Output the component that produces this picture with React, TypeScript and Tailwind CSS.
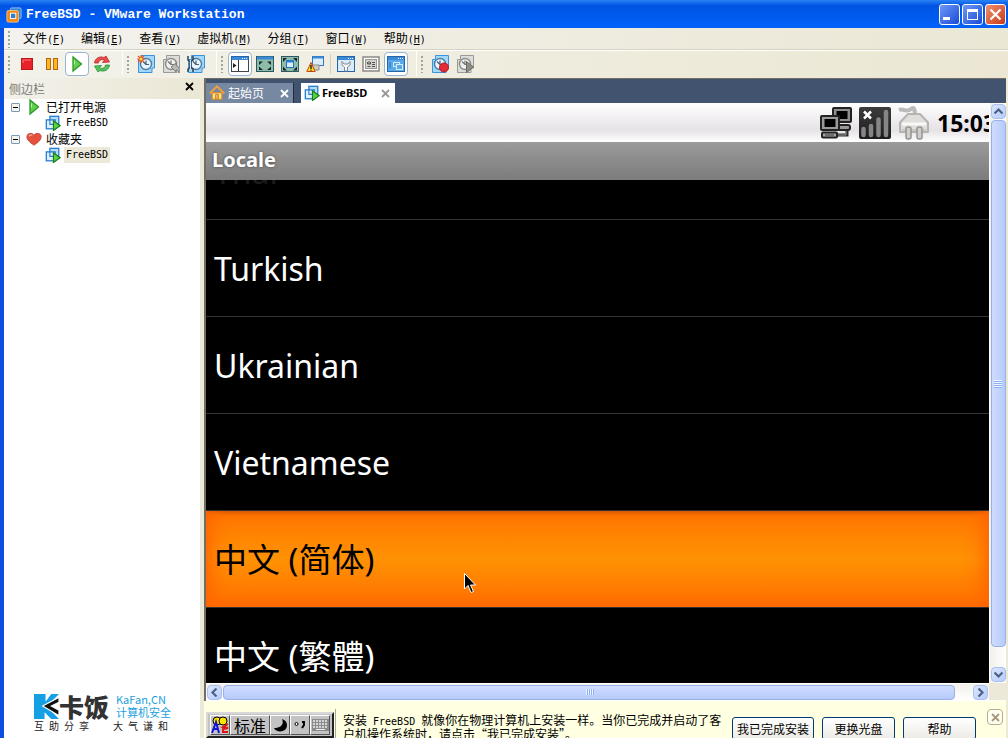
import type { ReactNode } from 'react'

const menus = [
  { label: '文件', key: 'F' },
  { label: '编辑', key: 'E' },
  { label: '查看', key: 'V' },
  { label: '虚拟机', key: 'M' },
  { label: '分组', key: 'T' },
  { label: '窗口', key: 'W' },
  { label: '帮助', key: 'H' }
]

const locales = [
  { name: 'Turkish', selected: false },
  { name: 'Ukrainian', selected: false },
  { name: 'Vietnamese', selected: false },
  { name: '中文 (简体)', selected: true },
  { name: '中文 (繁體)', selected: false }
]

/* ---------- 图标 ---------- */

function Svg({ size = 18, children }: { size?: number; children: ReactNode }) {
  return (
    <svg width={size} height={size} viewBox="0 0 18 18" fill="none" aria-hidden="true" className="shrink-0">
      {children}
    </svg>
  )
}

function LogoIcon() {
  return (
    <Svg size={16}>
      <rect x="5" y="1" width="12" height="12" rx="1.5" fill="#2f86d8" stroke="#9cc8f0" />
      <rect x="1" y="4" width="13" height="13" rx="1.5" fill="#f08a1c" stroke="#f9c27a" />
      <rect x="5" y="7" width="6" height="6" fill="#2f7fd0" stroke="#fff" />
    </Svg>
  )
}

function StopIcon() {
  return (
    <Svg>
      <rect x="3.5" y="3.500" width="11" height="11" fill="#e8222a" stroke="#b81a1a" />
      <path d="M5 8V5h8" stroke="#f77" />
    </Svg>
  )
}

function PauseIcon() {
  return (
    <Svg>
      <rect x="3.5" y="3.5" width="4" height="11" fill="#ffb520" stroke="#b8670c" />
      <rect x="10.5" y="3.5" width="4" height="11" fill="#ffb520" stroke="#b8670c" />
    </Svg>
  )
}

function PlayIcon() {
  return (
    <Svg>
      <path d="M5 2v14l8.500-7z" fill="#62d04c" stroke="#2c9a28" strokeWidth="1.300" />
      <path d="M6.500 5.500v4" stroke="#b9f0a8" />
    </Svg>
  )
}

function RestartIcon() {
  return (
    <Svg>
      <path d="M1.500 8C2 3 7 .8 11 2.500l2-1.500 3.500 6-7 .5 2-2.200C8.500 4 6 5 5.500 8z" fill="#ee4a4a" stroke="#b52b2b" strokeWidth=".8" />
      <path d="M16.500 10c-.5 5-5.500 7.200-9.500 5.500L5 17 1.500 11l7-.5-2 2.200c3 1.300 5.500.3 6-2.700z" fill="#55c25c" stroke="#2a8d35" strokeWidth=".8" />
    </Svg>
  )
}

type ClockProps = { gray?: boolean; children?: ReactNode }

function SnapshotIcon({ gray, children }: ClockProps) {
  const line = gray ? '#9a9a98' : '#3a94dc'
  return (
    <Svg>
      <path d="M4.500.5h13v12.500h-2.500v4.500H1.500v-13h3z" fill={gray ? '#dcdcda' : '#a4d6f6'} stroke={line} />
      <circle cx="9" cy="9" r="5.500" fill={gray ? '#f0f0ee' : '#eaf6fd'} stroke={gray ? '#8a8a88' : '#4a7da6'} strokeWidth="1.400" />
      <path d="M9 5.500V9.500h3M9 9.500 6 6.500" stroke={gray ? '#777' : '#44617a'} strokeWidth="1.200" />
      {children}
    </Svg>
  )
}

function WindowFrame({ children, fill = '#fff' }: { children: ReactNode; fill?: string }) {
  return (
    <Svg>
      <rect x=".5" y="1.500" width="17" height="15" fill={fill} stroke="#2466a8" />
      <rect x="1" y="2" width="16" height="3" fill="#3a8ad8" />
      <path d="M11 3.500h1M13 3.500h1M15 3.500h1" stroke="#fff" />
      {children}
    </Svg>
  )
}

function CornerArrows({ inner }: { inner?: boolean }) {
  return (
    <Svg>
      <rect x=".5" y="1.500" width="17" height="15" fill="#8fbba9" stroke="#2c5a63" />
      {!inner && <path d="M1 3h16" stroke="#3a8ad8" strokeWidth="3" />}
      <path
        d={inner ? 'M2 3h4L2 7zM16 3h-4l4 4zM2 15.500h4l-4-4zM16 15.500h-4l4-4z' : 'M3 6.500h4L3 10zM15 6.500h-4l4 3.500zM3 15h4l-4-3.500zM15 15h-4l4-3.500z'}
        fill="#16262c"
      />
      {inner && (
        <>
          <rect x="5.500" y="5.500" width="7" height="7" fill="#d9ecfb" stroke="#1f6fc0" />
          <path d="M5 6.500h8" stroke="#2a80d6" strokeWidth="2" />
        </>
      )}
    </Svg>
  )
}

function UnityIcon() {
  return (
    <Svg>
      <rect x="6.500" y="1.500" width="11" height="9" fill="#dcecfa" stroke="#3178c0" />
      <path d="M7 2.500h10" stroke="#3a8ad8" strokeWidth="2" />
      <path d="M6 10h7v5H8z" fill="#cfcfc6" stroke="#8d8d84" />
      <path d="M5 7.500.8 16.500h8.400z" fill="#ffdf26" stroke="#c84518" />
      <path d="M5 10v4M5 14.800v1" stroke="#000" strokeWidth="1.200" />
    </Svg>
  )
}

function VmIcon() {
  return (
    <Svg size={16}>
      <rect x="5.500" y="1.500" width="10" height="9" fill="#b4dcf8" stroke="#2b80cf" strokeWidth="1.500" />
      <rect x="1.500" y="5.500" width="10" height="10" fill="#dff0fd" stroke="#2b80cf" strokeWidth="1.500" />
      <path d="M5.500 5v5.500h6" stroke="#2b80cf" strokeWidth="1.300" />
      <path d="M9.500 6.500v11l7.500-5.500z" fill="#5cd03f" stroke="#167f18" strokeWidth="1.300" />
    </Svg>
  )
}

function HomeIcon() {
  return (
    <Svg size={16}>
      <path d="M3.500 8.500h11V16h-11z" fill="#fbe08a" stroke="#d58a28" strokeWidth="1.300" />
      <path d="M.8 9.500 9 1.500l8.200 8" stroke="#eda23c" strokeWidth="2.200" />
      <path d="M7.500 10.500h3V16h-3z" fill="#f3b455" stroke="#c87b1e" />
    </Svg>
  )
}

function HeartIcon() {
  return (
    <Svg size={16}>
      <path d="M9 16C4 12.500 1 10 1 6.500 1 2 7 1.500 9 4.800c2-3.300 8-2.800 8 1.700 0 3.500-3 6-8 9.500z" fill="#e4523f" stroke="#bf4536" />
      <path d="M3.500 6c.4-1.800 2.200-2 3.500-1" stroke="#f8a899" strokeWidth="1.500" />
    </Svg>
  )
}

function CloseIcon({ className = '' }: { className?: string }) {
  return (
    <svg width="9" height="9" viewBox="0 0 9 9" className={className} aria-hidden="true">
      <path d="M1 1l7 7M8 1L1 8" stroke="currentColor" strokeWidth="1.800" />
    </svg>
  )
}

function Chevron({ d }: { d: string }) {
  return (
    <svg width="9" height="9" viewBox="0 0 9 9" fill="none" aria-hidden="true">
      <path d={d} stroke="#4d6185" strokeWidth="2.200" />
    </svg>
  )
}

function NetworkIcon() {
  return (
    <svg width="32" height="32" viewBox="0 0 32 32" aria-hidden="true">
      <path d="M20 22h7v6H17" fill="none" stroke="#2a2a2a" strokeWidth="3" />
      <rect x="13" y="1" width="18" height="14" rx="1" fill="#8d8d8d" stroke="#222" strokeWidth="2" />
      <rect x="16.500" y="4" width="11" height="8" fill="#000" />
      <rect x="18" y="18" width="12" height="5" rx="2" fill="#9a9a9a" stroke="#222" strokeWidth="2" />
      <rect x="1" y="9" width="18" height="14" rx="1" fill="#9a9a9a" stroke="#222" strokeWidth="2" />
      <rect x="4.500" y="12" width="11" height="8" fill="#000" />
      <rect x="2" y="25.500" width="15" height="5" rx="1" fill="#a8a8a8" stroke="#222" strokeWidth="2" />
      <path d="M5 28h9" stroke="#333" />
      <path d="M18 28h8V24" fill="none" stroke="#999" strokeWidth="1" />
    </svg>
  )
}

function SignalIcon() {
  return (
    <svg width="32" height="32" viewBox="0 0 32 32" aria-hidden="true">
      <defs>
        <linearGradient id="signal" x1="0" y1="0" x2="0" y2="1">
          <stop offset="0" stopColor="#3c3c3c" />
          <stop offset="1" stopColor="#1d1d1d" />
        </linearGradient>
      </defs>
      <rect width="32" height="32" rx="2" fill="url(#signal)" />
      <path d="M4.500 28v-6M12 28V19M19.500 28V12.500M27 28V5" stroke="#868686" strokeWidth="4.500" strokeLinecap="round" />
      <path d="M5 4.500l7 7M12 4.500l-7 7" stroke="#fff" strokeWidth="2.500" />
    </svg>
  )
}

function PlugIcon() {
  return (
    <svg width="32" height="36" viewBox="0 0 32 36" fill="none" aria-hidden="true">
      <path d="M1 5c5-2 7 3 12-1 3-3 4 1 4 6" stroke="#bcbab8" strokeWidth="4" />
      <path d="M10 9h12l8 8.500V27H2v-9.500z" fill="#e0dedb" stroke="#b6b4b1" strokeWidth="2" strokeLinejoin="round" />
      <path d="M4 19h24" stroke="#f8f8f6" strokeWidth="3" />
      <path d="M4 25h24" stroke="#cbc9c6" strokeWidth="2" />
      <rect x="8" y="22" width="5" height="12" rx="2" fill="#d0cecb" stroke="#96948f" strokeWidth="1.500" />
      <rect x="19" y="22" width="5" height="12" rx="2" fill="#d0cecb" stroke="#96948f" strokeWidth="1.500" />
    </svg>
  )
}

/* ---------- 工具栏 ---------- */

function Grip() {
  return (
    <svg width="3" height="18" viewBox="0 0 3 18" className="mr-[3px] shrink-0" aria-hidden="true">
      <path d="M1 1v17" stroke="#a5a397" strokeWidth="2" strokeDasharray="2 2" />
    </svg>
  )
}

function ToolButton({ label, active, children }: { label: string; active?: boolean; children: ReactNode }) {
  return (
    <button
      aria-label={label}
      className={`flex h-6 w-6 items-center justify-center rounded-sm border ${
        active ? 'border-[#98b5d2] bg-white' : 'border-transparent'
      }`}
    >
      {children}
    </button>
  )
}

function ToolGroup({ children, last }: { children: ReactNode; last?: boolean }) {
  return (
    <div className={`flex items-center gap-px pl-1 pr-2 ${last ? '' : 'border-r border-white'}`}>
      <Grip />
      {children}
    </div>
  )
}

function Toolbar() {
  return (
    <div className="flex h-7 shrink-0 border-t border-white bg-linear-to-r from-[#f3f2ea] to-[#ebe7d3] pb-0.5">
      <ToolGroup>
        <ToolButton label="关机"><StopIcon /></ToolButton>
        <ToolButton label="挂起"><PauseIcon /></ToolButton>
        <ToolButton label="开机" active><PlayIcon /></ToolButton>
        <ToolButton label="重启"><RestartIcon /></ToolButton>
      </ToolGroup>
      <ToolGroup>
        <ToolButton label="创建快照">
          <SnapshotIcon>
            <path d="M4 0v8M0 4h8M1 1l6 6M7 1 1 7" stroke="#f0501c" strokeWidth="1.200" />
            <circle cx="4" cy="4" r="1.500" fill="#ffd83a" />
          </SnapshotIcon>
        </ToolButton>
        <ToolButton label="恢复快照">
          <SnapshotIcon gray>
            <path d="M9 12l5-4v2.500c3 .5 4 4 3 7.500-1-3-2-3-3-3v2z" fill="#b9b9b7" stroke="#7d7d7b" />
          </SnapshotIcon>
        </ToolButton>
        <ToolButton label="管理快照">
          <SnapshotIcon>
            <path d="M1 1v4l2 1.500v6L1 14v3M6 1v4L4 6.500v6L6 14v3" fill="none" stroke="#2f4256" strokeWidth="1.500" />
            <path d="M3.500 5v9" stroke="#dfe9f2" />
          </SnapshotIcon>
        </ToolButton>
      </ToolGroup>
      <ToolGroup>
        <ToolButton label="显示侧边栏" active>
          <WindowFrame>
            <path d="M7.500 5v11.500" stroke="#333" />
            <path d="M.5 5v11.500h17V5" stroke="#444" />
            <path d="M2 8v5l3.500-2.500z" fill="#222" />
          </WindowFrame>
        </ToolButton>
        <ToolButton label="全屏"><CornerArrows /></ToolButton>
        <ToolButton label="快速切换"><CornerArrows inner /></ToolButton>
        <ToolButton label="Unity"><UnityIcon /></ToolButton>
        <span className="mx-0.5 h-5 w-px bg-[#d3cfba]" />
        <ToolButton label="设置">
          <WindowFrame fill="#dcebf8">
            <path d="M5 6.500v3.500l2.500 2V16h3v-4l2.500-2V6.500l-2 2.500H7z" fill="#fff" stroke="#7d8c9a" />
          </WindowFrame>
        </ToolButton>
        <ToolButton label="摘要">
          <Svg>
            <rect x="1" y="2" width="16" height="14" fill="#fff" stroke="#8c8a84" strokeWidth="1.500" />
            <rect x="3.500" y="4.500" width="11" height="9" fill="#d4d3cf" stroke="#9a9892" />
            <path d="M5.500 7v2h3V7M7 6v3M5.500 11.500h3M10 7.500h3M10 9.500h3M10 11.500h3" stroke="#555" />
          </Svg>
        </ToolButton>
        <ToolButton label="控制台" active>
          <WindowFrame fill="#5aaaea">
            <rect x="6.500" y="7.500" width="6" height="4" stroke="#d6ecfc" />
            <rect x="9.500" y="9.500" width="6" height="5" fill="#5aaaea" stroke="#d6ecfc" />
            <path d="M2 8h2M2 10h2M2 12h2" stroke="#2c72b8" />
          </WindowFrame>
        </ToolButton>
      </ToolGroup>
      <ToolGroup last>
        <ToolButton label="录制">
          <SnapshotIcon>
            <circle cx="13" cy="12.500" r="4.500" fill="#e42a35" stroke="#b81823" />
          </SnapshotIcon>
        </ToolButton>
        <ToolButton label="回放">
          <SnapshotIcon gray>
            <path d="M10.500 6.500v11l7-5.500z" fill="#8b8f88" stroke="#666a64" />
          </SnapshotIcon>
        </ToolButton>
      </ToolGroup>
    </div>
  )
}

/* ---------- 侧边栏 ---------- */

function TreeGroup({ icon, label, selected }: { icon: ReactNode; label: string; selected?: boolean }) {
  return (
    <li>
      <div className="flex h-4 items-center pl-[7px]">
        <button
          aria-label={`折叠${label}`}
          className="flex h-[9px] w-[9px] items-center justify-center rounded-[1px] border border-[#7b98b5] bg-[#f4f3ec]"
        >
          <span className="h-px w-[5px] bg-black" />
        </button>
        <span className="ml-1.5 mr-1 flex w-4 justify-center">{icon}</span>
        <span className="text-xs leading-4">{label}</span>
      </div>
      <div className="flex h-4 items-center pl-[41px]">
        <VmIcon />
        <span className={`ml-[3px] px-0.5 font-[DejaVu_Sans_Mono,monospace] text-[10px] leading-4 ${selected ? 'bg-[#ece9d8]' : ''}`}>
          FreeBSD
        </span>
      </div>
    </li>
  )
}

function Sidebar() {
  return (
    <aside className="flex w-[196px] shrink-0 flex-col bg-white">
      <div className="flex h-[21px] shrink-0 items-center justify-between bg-linear-to-r from-[#f2f1ea] to-[#ebe7d5] pl-[5px] pr-1.5">
        <h2 className="text-xs leading-4 text-[#7f7d74]">侧边栏</h2>
        <button aria-label="关闭侧边栏" className="mb-1"><CloseIcon /></button>
      </div>
      <ul>
        <TreeGroup icon={<PlayIcon />} label="已打开电源" />
        <TreeGroup icon={<HeartIcon />} label="收藏夹" selected />
      </ul>
      <div className="mt-auto pb-1.5 pl-[30px]">
        <div className="flex items-center">
          <svg width="25" height="25" viewBox="0 0 26 26" aria-hidden="true">
            <path d="M0 0h12v8L18 0h8l-8 8v10l8 8h-8l-7-7v7H0z" fill="#159fe4" />
            <path d="M26 3.500 9 12.500l17 10V17l-8-4.500 8-4z" fill="#111" stroke="#fff" strokeWidth="1.200" />
          </svg>
          <strong className="text-[25px] leading-7 font-black text-[#333]">卡饭</strong>
          <div className="ml-[7px] text-[11px] leading-[13px] text-[#1a9fe0]">
            <p>KaFan,CN</p>
            <p>计算机安全</p>
          </div>
        </div>
        <div className="flex gap-6 text-[10px] leading-3 text-[#222]">
          {['互助分享', '大气谦和'].map((motto) => (
            <p key={motto} className="flex gap-[5px]">
              {[...motto].map((char) => (
                <span key={char}>{char}</span>
              ))}
            </p>
          ))}
        </div>
      </div>
    </aside>
  )
}

/* ---------- 虚拟机画面 ---------- */

function TabBar() {
  return (
    <div className="flex h-6 shrink-0 items-end bg-[#41536f]">
      <div className="flex h-5 items-center border-r border-[#1f2a3a] bg-[#7788a3] pl-[3px] pr-1 text-white">
        <HomeIcon />
        <button className="ml-[3px] text-xs leading-4">起始页</button>
        <button aria-label="关闭起始页" className="ml-4"><CloseIcon /></button>
      </div>
      <div className="ml-[7px] flex h-5 items-center bg-white pl-[3px] pr-[5px]">
        <VmIcon />
        <button className="ml-0.5 font-[Noto_Sans,sans-serif] text-[11px] leading-4 font-bold">FreeBSD</button>
        <button aria-label="关闭 FreeBSD" className="ml-3.5 text-[#999]"><CloseIcon /></button>
      </div>
    </div>
  )
}

function GuestScreen() {
  return (
    <div className="flex min-w-0 flex-1 flex-col overflow-hidden bg-black font-[Noto_Sans,Noto_Sans_CJK_SC,sans-serif]">
      <div className="flex h-[39px] shrink-0 items-center justify-end gap-[7px] bg-linear-to-b from-white via-[#e6e2e6] via-70% to-white">
        <NetworkIcon />
        <SignalIcon />
        <PlugIcon />
        <span className="w-[52px] overflow-hidden text-[23px] leading-7 font-bold text-black">15:03</span>
      </div>
      <h1 className="h-[38px] shrink-0 bg-linear-to-b from-[#9b9b9b] to-[#7c7c7c] pl-1.5 text-xl leading-[36px] font-bold text-white [text-shadow:0_0_3px_#444]">
        Locale
      </h1>
      <ul className="min-h-0 flex-1 overflow-hidden text-[32px] leading-10">
        <li className="flex h-10 items-end overflow-hidden border-b border-[#333]">
          <button className="h-24 shrink-0 pl-2 pt-0.5 text-[#1c1c1c]">Thai</button>
        </li>
        {locales.map((locale) => (
          <li key={locale.name} className="border-b border-[#333]">
            <button
              className={`block h-24 w-full pl-2 pt-0.5 text-left ${locale.name.startsWith('中文') ? 'text-[33px]' : ''} ${
                locale.selected
                  ? 'bg-linear-to-b from-[#ff7400] via-[#ff9204] to-[#ff6c00] text-black shadow-[inset_14px_0_18px_-8px_#ff6500,inset_-14px_0_18px_-8px_#ff6500,inset_0_3px_4px_-2px_#a84600]'
                  : 'text-white'
              }`}
            >
              {locale.name}
            </button>
          </li>
        ))}
      </ul>
    </div>
  )
}

const scrollButton =
  'flex h-[15px] w-[15px] shrink-0 items-center justify-center rounded-sm border border-[#a9bff0] bg-linear-to-br from-[#dbe6ff] to-[#b7ccfb]'

function VerticalScroll() {
  return (
    <div className="flex w-[17px] shrink-0 flex-col items-center gap-px border-l border-white bg-linear-to-r from-[#f1f0ea] to-white py-px">
      <button aria-label="向上滚动" className={scrollButton}><Chevron d="M.5 6.500l4-4 4 4" /></button>
      <div className="flex w-[15px] flex-1 flex-col items-center justify-center gap-px rounded-sm border border-[#98b0e8] bg-linear-to-r from-[#cfdcfe] to-[#b6cafa]">
        {[0, 1, 2, 3].map((n) => (
          <span key={n} className="h-px w-2 bg-[#eef4ff] shadow-[0_1px_0_#8cb0f8]" />
        ))}
      </div>
      <div className="h-[18px] shrink-0" />
      <button aria-label="向下滚动" className={scrollButton}><Chevron d="M.5 2.500l4 4 4-4" /></button>
    </div>
  )
}

function HorizontalScroll() {
  return (
    <div className="flex h-[18px] shrink-0 border-b border-white bg-[#ece9d8] pr-[17px]">
      <div className="flex flex-1 items-center gap-px border-t border-white bg-linear-to-b from-[#f1f0ea] to-white px-px">
        <button aria-label="向左滚动" className={scrollButton}><Chevron d="M6.500.5l-4 4 4 4" /></button>
        <div className="flex h-[15px] flex-1 items-center justify-center gap-px rounded-sm border border-[#98b0e8] bg-linear-to-b from-[#cfdcfe] to-[#b6cafa]">
          {[0, 1, 2, 3].map((n) => (
            <span key={n} className="h-1.5 w-px bg-[#eef4ff] shadow-[1px_0_0_#8cb0f8]" />
          ))}
        </div>
        <div className="w-4 shrink-0" />
        <button aria-label="向右滚动" className={scrollButton}><Chevron d="M2.500.5l4 4-4 4" /></button>
      </div>
    </div>
  )
}

/* ---------- 底部提示栏 ---------- */

const imeKey = 'flex h-5 items-center justify-center border border-t-white border-l-white border-r-[#555] border-b-[#555] bg-[#c3c3c3]'

function ImeBar() {
  return (
    <div className="ml-0.5 mt-[11px] flex h-[26px] items-center border-2 border-t-[#d8d8d8] border-l-[#d8d8d8] border-r-[#222] border-b-[#222] bg-[#c3c3c3] px-0.5">
      <button aria-label="输入法" className={`${imeKey} w-5`}>
        <Svg>
          <circle cx="6" cy="5" r="4" fill="#ffe600" stroke="#000" />
          <circle cx="12" cy="5" r="4" fill="#ffe600" stroke="#000" />
          <path d="M1 17 5 6l3 11M2 13h5" stroke="#1414d8" strokeWidth="2" />
          <path d="M17 8l-5 3 5 1-5 1v3h5" stroke="#e01414" strokeWidth="2" />
        </Svg>
      </button>
      <button className={`${imeKey} w-10 text-base leading-4`}>标准</button>
      <button aria-label="半角" className={`${imeKey} w-5`}>
        <svg width="13" height="13" viewBox="0 0 13 13" aria-hidden="true">
          <path d="M8 0c2 4 0 9-8 9 2 5 13 5 13-3 0-3-2-5-5-6z" fill="#000" />
        </svg>
      </button>
      <button aria-label="英文标点" className={`${imeKey} w-5`}>
        <svg width="12" height="8" viewBox="0 0 12 8" fill="none" aria-hidden="true">
          <circle cx="2.500" cy="3" r="1.500" fill="#fff" stroke="#000" />
          <path d="M8 1h2v3L8 7" stroke="#000" strokeWidth="2" />
        </svg>
      </button>
      <button aria-label="软键盘" className={`${imeKey} w-5`}>
        <svg width="17" height="12" viewBox="0 0 17 12" aria-hidden="true">
          <rect width="17" height="12" fill="#8b8b8b" />
          <path d="M1 2h15M1 5h15M1 8h15" stroke="#eee" strokeWidth="1.500" strokeDasharray="2 1" />
          <path d="M4 10.500h9" stroke="#eee" />
        </svg>
      </button>
    </div>
  )
}

const noticeButton =
  'mt-4 h-[23px] rounded-[3px] border border-[#003c74] bg-linear-to-b from-white to-[#ecebe5] text-xs leading-4'

function NoticeBar() {
  return (
    <div className="flex h-[37px] shrink-0 items-start overflow-hidden bg-[#ffffe1] pr-[3px]">
      <ImeBar />
      <div className="ml-px mt-2 h-8 border-l border-[#aaa899] pl-[7px]">
        <p className="mt-[5px] text-xs leading-3 whitespace-nowrap">
          安装
          <span className="font-[DejaVu_Sans_Mono,monospace] text-[10px]">{' FreeBSD '}</span>
          就像你在物理计算机上安装一样。当你已完成并启动了客
          <br />
          户机操作系统时，请点击“我已完成安装”。
        </p>
      </div>
      <div className="ml-auto flex gap-2">
        <button className={`${noticeButton} w-[82px]`}>我已完成安装</button>
        <button className={`${noticeButton} w-[73px]`}>更换光盘</button>
        <button className={`${noticeButton} w-[73px]`}>帮助</button>
      </div>
      <button
        aria-label="关闭提示"
        className="ml-[11px] mt-2 flex h-4 w-4 items-center justify-center rounded-sm border border-[#b9ab92] bg-[#fffef0] text-[#a8987c]"
      >
        <CloseIcon />
      </button>
    </div>
  )
}

/* ---------- 窗口 ---------- */

const captionButton = 'flex h-[21px] w-[21px] items-center justify-center rounded-[3px] border border-white'

function TitleBar() {
  return (
    <header className="flex h-7 shrink-0 items-center bg-linear-to-b from-[#2a82f5] via-[#0054e3] via-20% to-[#0062fb] pl-1.5 pr-0.5 pt-px">
      <LogoIcon />
      <span className="ml-1 font-[Liberation_Mono,monospace] text-[13px] leading-4 font-bold text-white">
        FreeBSD - VMware Workstation
      </span>
      <div className="ml-auto flex gap-0.5">
        <button aria-label="最小化" className={`${captionButton} bg-linear-to-br from-[#6f97f4] to-[#1a48d8]`}>
          <span className="mt-2 mr-1.5 h-[3px] w-[7px] bg-white" />
        </button>
        <button aria-label="最大化" className={`${captionButton} bg-linear-to-br from-[#6f97f4] to-[#1a48d8]`}>
          <span className="h-[11px] w-[11px] border border-t-[3px] border-white" />
        </button>
        <button aria-label="关闭" className={`${captionButton} bg-linear-to-br from-[#f0906c] to-[#c83410]`}>
          <svg width="13" height="13" viewBox="0 0 13 13" aria-hidden="true">
            <path d="M1.500 1.500l10 10M11.500 1.500l-10 10" stroke="#fff" strokeWidth="2.200" />
          </svg>
        </button>
      </div>
    </header>
  )
}

function MenuBar() {
  return (
    <nav className="flex h-[22px] shrink-0 items-center border-b border-[#d6d2c0] bg-linear-to-r from-[#f3f2ee] to-[#ebe7d5] pl-1">
      <Grip />
      <div className="flex pl-px">
        {menus.map((menu) => (
          <button key={menu.key} className="px-2 text-xs leading-4 whitespace-nowrap">
            {menu.label}
            <span className="font-[DejaVu_Sans_Mono,monospace] text-[10px]">
              (<u>{menu.key}</u>)
            </span>
          </button>
        ))}
      </div>
    </nav>
  )
}

function App() {
  return (
    <div className="relative flex h-screen flex-col overflow-hidden bg-[#ece9d8] font-[Noto_Sans_CJK_SC,sans-serif] text-black">
      <TitleBar />
      <div className="flex min-h-0 flex-1 flex-col border-l-4 border-[#0a4fe0]">
        <MenuBar />
        <Toolbar />
        <div className="flex min-h-0 flex-1">
          <Sidebar />
          <main className="ml-1 mr-0.5 flex min-w-0 flex-1 flex-col">
            <div className="flex min-h-0 flex-1 flex-col border-l-2 border-t border-[#716f64]">
              <TabBar />
              <div className="flex min-h-0 flex-1">
                <GuestScreen />
                <VerticalScroll />
              </div>
              <HorizontalScroll />
            </div>
            <NoticeBar />
          </main>
        </div>
      </div>

      {/* 鼠标指针浮在画面之上 */}
      <svg width="12" height="20" viewBox="0 0 12 20" className="absolute top-[573px] left-[464px]" aria-hidden="true">
        <path d="M.5.5v15.500l3.500-3.500 3 7 2.500-1-3-6.500h5z" fill="#000" stroke="#fff" />
      </svg>
    </div>
  )
}

export default App
